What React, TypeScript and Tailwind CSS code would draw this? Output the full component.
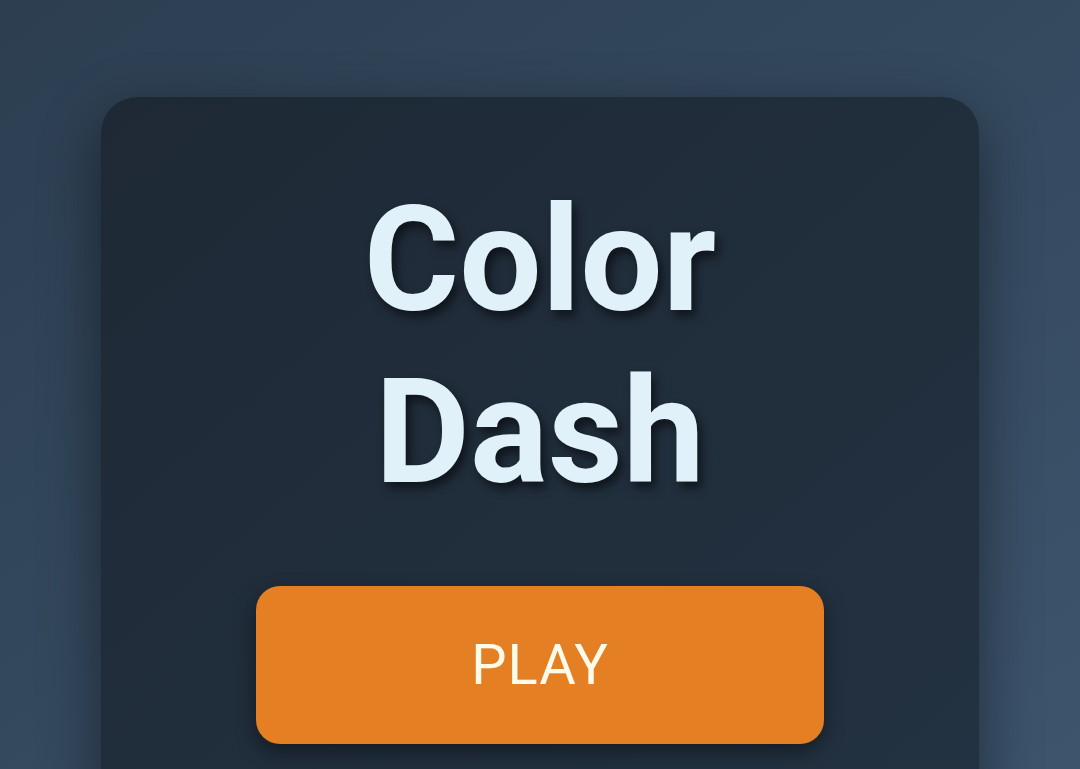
import React from 'react';

export default function App() {
  return (
    <div
      className="h-[769px] w-full overflow-hidden bg-gradient-to-br from-[#2c3e50] to-[#3d546d] flex justify-center pt-[97px]"
      style={{ fontFamily: 'Roboto, "Noto Sans", sans-serif' }}
    >
      <div className="w-[878px] h-[760px] shrink-0 rounded-[36px] bg-gradient-to-br from-[#1e2935] to-[#233242] shadow-[0_20px_60px_rgba(0,0,0,0.45)] flex flex-col items-center pt-[78px]">
        <h1 className="text-[146px] font-bold leading-[172px] text-center text-[#e0f1f9] [text-shadow:4px_6px_10px_rgba(0,0,0,0.55)]">
          Color
          <br />
          Dash
        </h1>
        <button className="mt-[67px] w-[568px] h-[158px] rounded-[24px] bg-[#e47f23] text-[#fffbea] text-[56px] font-normal tracking-[1px] shadow-[0_8px_20px_rgba(0,0,0,0.4)]">
          PLAY
        </button>
      </div>
    </div>
  );
}
